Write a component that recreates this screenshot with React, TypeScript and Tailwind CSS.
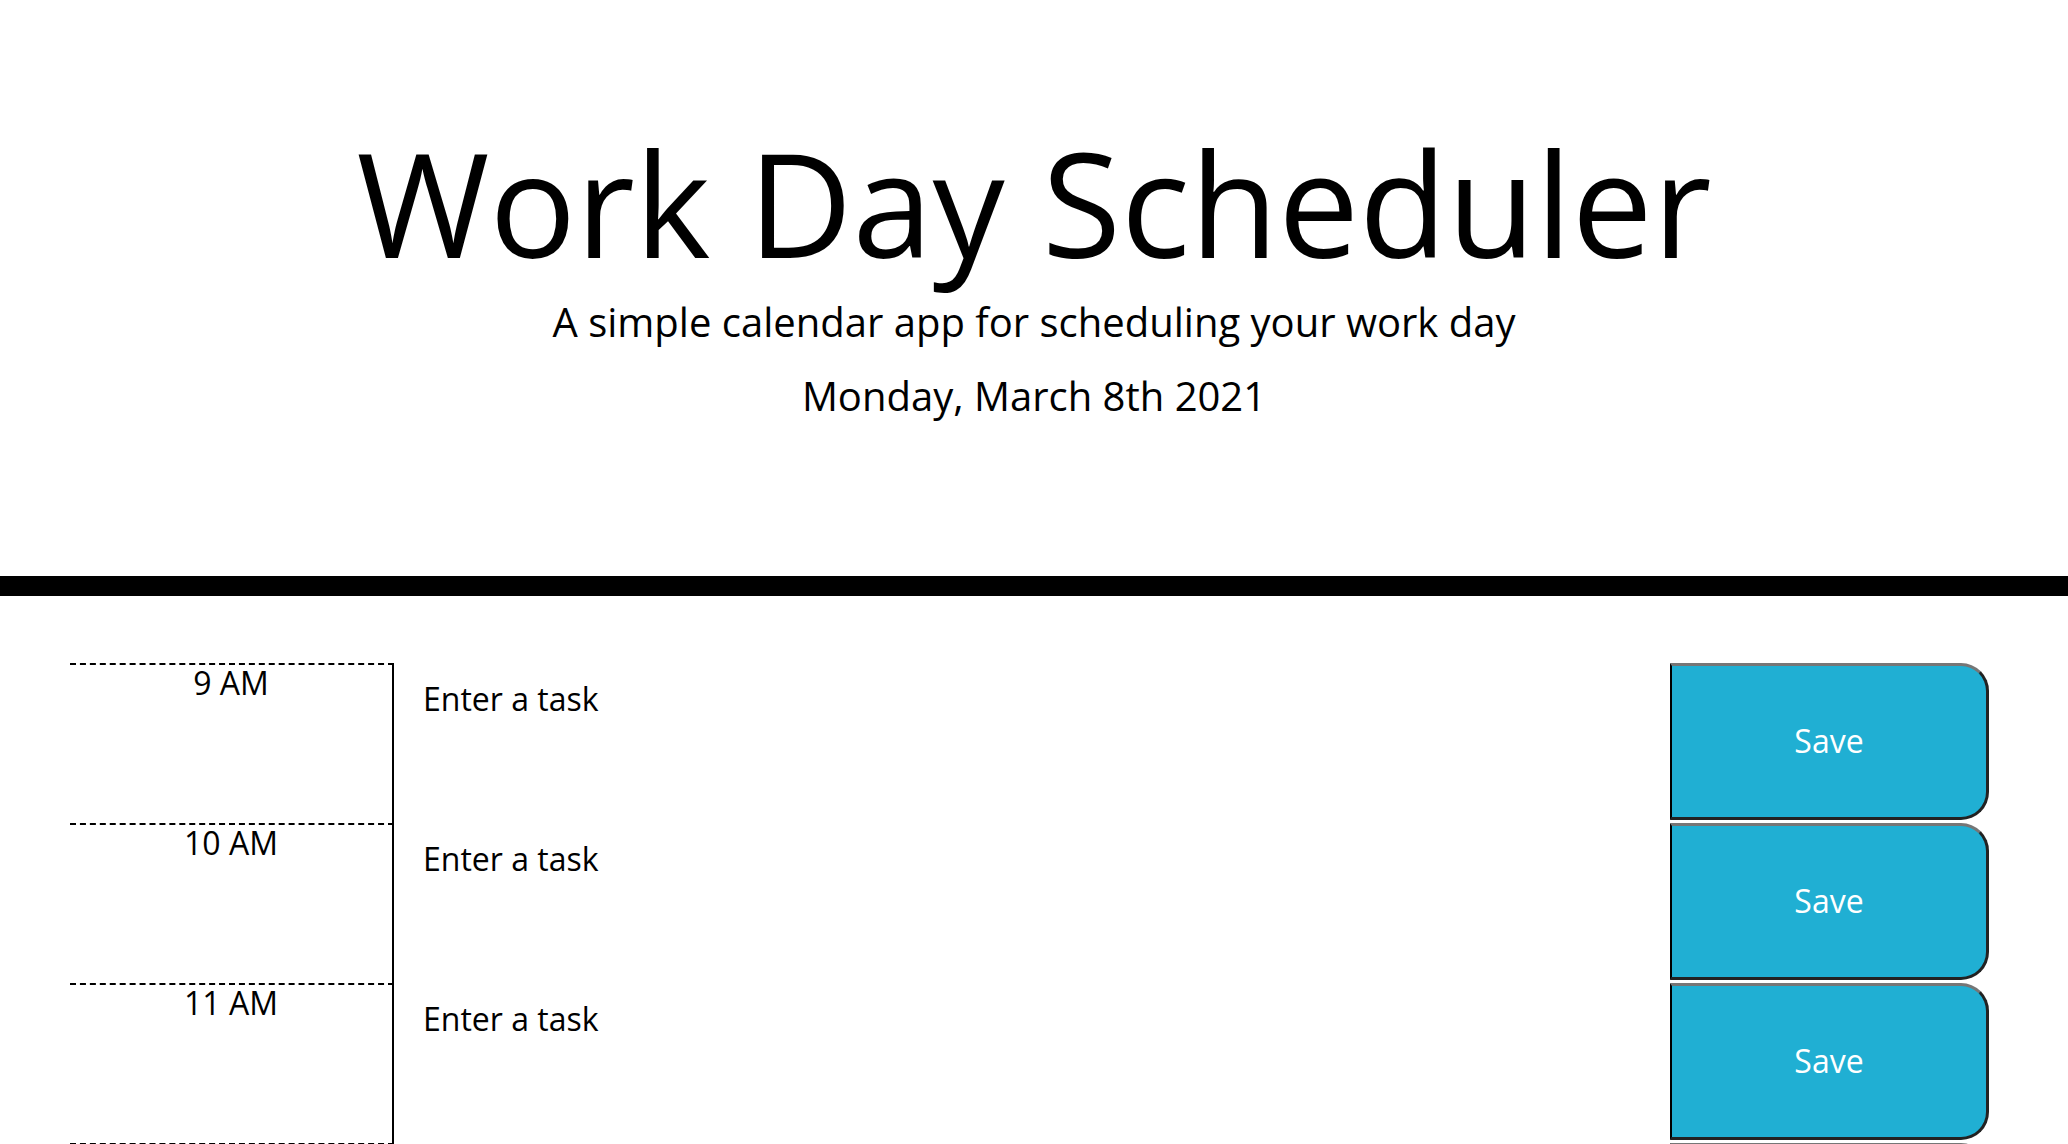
import React, { useState } from 'react';

const hours = ['9 AM', '10 AM', '11 AM', '12 PM', '1 PM', '2 PM', '3 PM', '4 PM', '5 PM'];

const TimeBlock = ({ hour }: { hour: string }) => {
  const [task, setTask] = useState('');

  return (
    <div className="flex h-[160px]">
      <div className="w-[324px] shrink-0 border-t-2 border-r-2 border-black pt-[2px] [border-top-style:dashed] text-center text-[32px] leading-none">
        {hour}
      </div>
      <textarea
        value={task}
        onChange={(e) => setTask(e.target.value)}
        placeholder="Enter a task"
        className="flex-1 resize-none bg-white pt-[12px] pl-[29px] pr-4 text-[32px] leading-[1.5] text-black outline-none placeholder:text-black"
      />
      <button
        type="button"
        className="h-[157px] w-[319px] shrink-0 rounded-r-[28px] border-t-[3px] border-r-[3px] border-b-[3px] border-l-2 border-t-[#767676] border-r-[#222] border-b-[#222] border-l-black bg-[#20afd3] text-[32px] text-white"
      >
        Save
      </button>
    </div>
  );
};

const App = () => {
  return (
    <div className="min-h-screen bg-white text-black" style={{ fontFamily: '"Open Sans", sans-serif' }}>
      <header className="border-b-[20px] border-black pt-[116px] pb-[150px] text-center">
        <h1 className="text-[144px] font-normal leading-[1.2]">Work Day Scheduler</h1>
        <p className="mt-[3px] text-[40px] leading-[1.5]">A simple calendar app for scheduling your work day</p>
        <p className="mt-[14px] text-[40px] leading-[1.5]">Monday, March 8th 2021</p>
      </header>

      <div className="mt-[67px] pl-[70px] pr-[79px]">
        {hours.map((h) => (
          <TimeBlock key={h} hour={h} />
        ))}
      </div>
    </div>
  );
};

export default App;
